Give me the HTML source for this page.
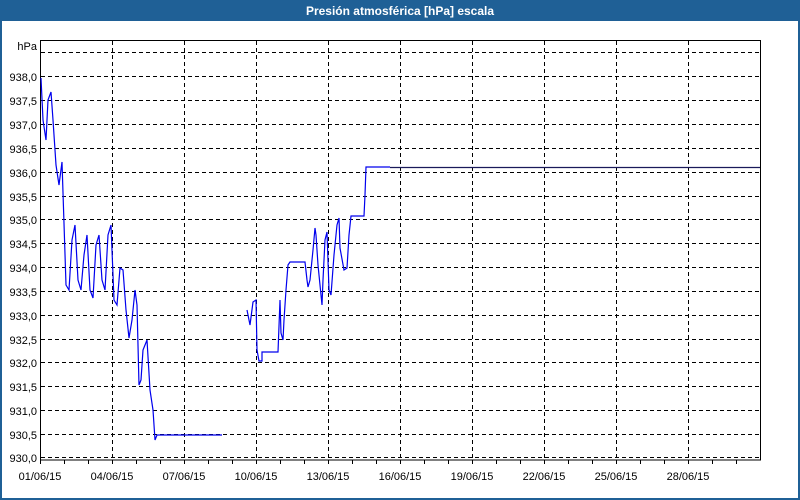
<!DOCTYPE html>
<html><head><meta charset="utf-8"><style>
html,body{margin:0;padding:0;width:800px;height:500px;overflow:hidden;background:#fff;font-family:"Liberation Sans",Tahoma,sans-serif}
</style></head><body>
<svg width="800" height="500" xmlns="http://www.w3.org/2000/svg" style="display:block">
<rect x="0" y="0" width="800" height="500" fill="#fff"/>
<rect x="0" y="0" width="800" height="21" fill="#1f6096"/>
<rect x="0" y="21" width="2" height="479" fill="#1f6096"/>
<rect x="798" y="21" width="2" height="479" fill="#1f6096"/>
<rect x="0" y="498" width="800" height="2" fill="#1f6096"/>
<text x="400" y="15" fill="#fff" font-size="12" font-weight="bold" text-anchor="middle" font-family="Liberation Sans, sans-serif">Presión atmosférica [hPa] escala</text>
<g stroke="#000" stroke-width="1" stroke-dasharray="4,3" fill="none" shape-rendering="crispEdges">
<line x1="41" y1="52.5" x2="760" y2="52.5"/>
<line x1="41" y1="76.5" x2="760" y2="76.5"/>
<line x1="41" y1="100.5" x2="760" y2="100.5"/>
<line x1="41" y1="124.5" x2="760" y2="124.5"/>
<line x1="41" y1="148.5" x2="760" y2="148.5"/>
<line x1="41" y1="172.5" x2="760" y2="172.5"/>
<line x1="41" y1="196.5" x2="760" y2="196.5"/>
<line x1="41" y1="219.5" x2="760" y2="219.5"/>
<line x1="41" y1="243.5" x2="760" y2="243.5"/>
<line x1="41" y1="267.5" x2="760" y2="267.5"/>
<line x1="41" y1="291.5" x2="760" y2="291.5"/>
<line x1="41" y1="315.5" x2="760" y2="315.5"/>
<line x1="41" y1="339.5" x2="760" y2="339.5"/>
<line x1="41" y1="362.5" x2="760" y2="362.5"/>
<line x1="41" y1="386.5" x2="760" y2="386.5"/>
<line x1="41" y1="410.5" x2="760" y2="410.5"/>
<line x1="41" y1="434.5" x2="760" y2="434.5"/>
<line x1="41" y1="457.5" x2="760" y2="457.5"/>
<line x1="112.5" y1="41" x2="112.5" y2="460"/>
<line x1="184.5" y1="41" x2="184.5" y2="460"/>
<line x1="256.5" y1="41" x2="256.5" y2="460"/>
<line x1="328.5" y1="41" x2="328.5" y2="460"/>
<line x1="400.5" y1="41" x2="400.5" y2="460"/>
<line x1="472.5" y1="41" x2="472.5" y2="460"/>
<line x1="544.5" y1="41" x2="544.5" y2="460"/>
<line x1="616.5" y1="41" x2="616.5" y2="460"/>
<line x1="688.5" y1="41" x2="688.5" y2="460"/>
</g>
<rect x="40.5" y="40.5" width="720" height="419.5" fill="none" stroke="#000" stroke-width="1" shape-rendering="crispEdges"/>
<g stroke="#000" shape-rendering="crispEdges">
<path d="M40.5 460v4M64.5 460v4M88.5 460v4M112.5 460v4M136.5 460v4M160.5 460v4M184.5 460v4M208.5 460v4M232.5 460v4M256.5 460v4M280.5 460v4M304.5 460v4M328.5 460v4M352.5 460v4M376.5 460v4M400.5 460v4M424.5 460v4M448.5 460v4M472.5 460v4M496.5 460v4M520.5 460v4M544.5 460v4M568.5 460v4M592.5 460v4M616.5 460v4M640.5 460v4M664.5 460v4M688.5 460v4M712.5 460v4M736.5 460v4"/>
</g>
<g font-size="11" fill="#000" font-family="Liberation Sans, sans-serif" text-anchor="end">
<text x="37" y="50">hPa</text>
<text x="37" y="81">938,0</text><text x="37" y="105">937,5</text><text x="37" y="129">937,0</text>
<text x="37" y="153">936,5</text><text x="37" y="177">936,0</text><text x="37" y="201">935,5</text>
<text x="37" y="224">935,0</text><text x="37" y="248">934,5</text><text x="37" y="272">934,0</text>
<text x="37" y="296">933,5</text><text x="37" y="320">933,0</text><text x="37" y="344">932,5</text>
<text x="37" y="367">932,0</text><text x="37" y="391">931,5</text><text x="37" y="415">931,0</text>
<text x="37" y="439">930,5</text><text x="37" y="462">930,0</text>
</g>
<g font-size="11" fill="#000" font-family="Liberation Sans, sans-serif" text-anchor="middle">
<text x="40" y="480">01/06/15</text><text x="112" y="480">04/06/15</text><text x="184" y="480">07/06/15</text>
<text x="256" y="480">10/06/15</text><text x="328" y="480">13/06/15</text><text x="400" y="480">16/06/15</text>
<text x="472" y="480">19/06/15</text><text x="544" y="480">22/06/15</text><text x="616" y="480">25/06/15</text>
<text x="688" y="480">28/06/15</text>
</g>
<g fill="none" stroke="#0000ee" stroke-width="1.2">
<polyline points="41,78 43,120 46,140 48,100 51,92 53,120 56,165 59,185 62,162 66,285 69,290 72,240 75,225 78,280 81,290 84,255 87,235 90,290 93,298 96,245 99,235 102,280 105,290 108,235 111,225 114,300 117,305 120,268 123,270 126,310 129,338 132,320 135,290 137,305 139,385 141,380 143,350 147,340 150,390 153,410 155,440 157,435 222,435"/>
<polyline points="247,310 250,325 253,302 256,300 257,350 259,361 262,361 262,352 278,352 280,300 281,333 283,340 284,320 286,290 288,265 290,262 305,262 307,280 308,287 310,280 313,250 315,228 316,235 318,265 321,295 322,305 323,280 325,240 327,232 329,290 331,295 334,255 337,225 339,218 340,248 344,270 347,268 349,235 351,216 364,216 365,195 366,167 390,167"/>
</g>
<line x1="390" y1="167.5" x2="760" y2="167.5" stroke="#1a1a5a" stroke-width="1.2"/>
</svg>
</body></html>
